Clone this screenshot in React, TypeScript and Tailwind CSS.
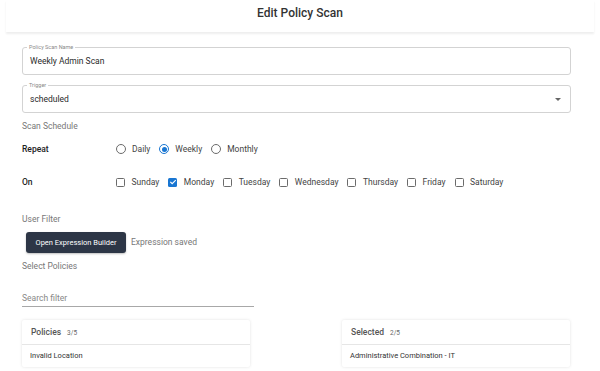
import type { ReactNode } from "react";

const days = ["Sunday", "Monday", "Tuesday", "Wednesday", "Thursday", "Friday", "Saturday"];
const repeats = ["Daily", "Weekly", "Monthly"];

function OutlinedField({ label, children }: { label: string; children: ReactNode }) {
  return (
    <div className="relative flex h-[28px] items-center rounded-[3px] border border-[#d3d3d3] px-[7px]">
      <span className="absolute -top-[5px] left-[4px] bg-white px-[2px] text-[5.5px] leading-[8px] text-[#8a8a8a]">
        {label}
      </span>
      {children}
    </div>
  );
}

function Radio({ checked }: { checked?: boolean }) {
  return (
    <span
      className={`flex h-[10px] w-[10px] items-center justify-center rounded-full border-[1.3px] ${
        checked ? "border-[#1976d2]" : "border-[#6b6b6b]"
      }`}
    >
      {checked && <span className="h-[5px] w-[5px] rounded-full bg-[#1976d2]" />}
    </span>
  );
}

function Checkbox({ checked }: { checked?: boolean }) {
  if (checked) {
    return (
      <span className="flex h-[9px] w-[9px] items-center justify-center rounded-[1.5px] bg-[#1976d2]">
        <svg aria-hidden="true" className="h-[8px] w-[8px]" fill="none" viewBox="0 0 24 24">
          <path d="M5 12.5l4.5 4.5L19 7.5" stroke="white" strokeWidth="3.2" strokeLinecap="square" />
        </svg>
      </span>
    );
  }
  return <span className="h-[9px] w-[9px] rounded-[1.5px] border-[1.2px] border-[#6b6b6b]" />;
}

function ListCard({ title, count, item }: { title: string; count: string; item: string }) {
  return (
    <div className="rounded-[2px] bg-white shadow-[0_0_3px_rgba(0,0,0,0.12)]">
      <div className="flex h-[25px] items-center border-b border-[#e6e6e6] px-[9px]">
        <div className="flex items-baseline gap-[6px]">
          <span className="text-[8.5px] font-medium text-[#555]">{title}</span>
          <span className="text-[6.5px] text-[#666]">{count}</span>
        </div>
      </div>
      <div className="flex h-[22px] items-center px-[8px] text-[7.5px] text-[#333]">{item}</div>
    </div>
  );
}

export default function App() {
  return (
    <div className="h-[371px] w-[600px] overflow-hidden bg-white font-['Roboto',sans-serif] text-[#222]">
      <header className="mx-[6px] flex h-[32px] justify-center pt-[5px] shadow-[0_2px_2px_rgba(0,0,0,0.07)]">
        <h1 className="text-[12px] font-medium leading-[16px] text-[#333]">Edit Policy Scan</h1>
      </header>

      <div className="pl-[22px] pr-[29px]">
        <div className="mt-[15px]">
          <OutlinedField label="Policy Scan Name">
            <span className="text-[8.5px] text-[#2a2a2a]">Weekly Admin Scan</span>
          </OutlinedField>
        </div>
        <div className="mt-[10px]">
          <OutlinedField label="Trigger">
            <span className="flex-1 text-[8.5px] text-[#2a2a2a]">scheduled</span>
            <span className="mr-[2px] h-0 w-0 border-x-[3px] border-t-[3px] border-x-transparent border-t-[#666]" />
          </OutlinedField>
        </div>

        <p className="mt-[7px] text-[8.5px] leading-[12px] text-[#777]">Scan Schedule</p>

        <div className="mt-[9px] flex h-[16px] items-center text-[8.5px]">
          <span className="w-[94px] font-medium text-[#222]">Repeat</span>
          <div className="flex items-center gap-[9px]">
            {repeats.map((r) => (
              <label className="flex items-center gap-[6px] text-[#444]" key={r}>
                <Radio checked={r === "Weekly"} />
                {r}
              </label>
            ))}
          </div>
        </div>

        <div className="mt-[17px] flex h-[16px] items-center text-[8.5px]">
          <span className="w-[94px] font-medium text-[#222]">On</span>
          <div className="flex items-center gap-[9px]">
            {days.map((d) => (
              <label className="flex items-center gap-[6.5px] text-[#444]" key={d}>
                <Checkbox checked={d === "Monday"} />
                {d}
              </label>
            ))}
          </div>
        </div>

        <p className="mt-[23px] text-[8.5px] leading-[12px] text-[#777]">User Filter</p>

        <div className="mt-[7px] flex items-center gap-[5px]">
          <button
            className="ml-[4px] h-[21px] w-[100px] rounded-[3px] bg-[#2d3646] text-[7.5px] font-normal text-white shadow-[0_1px_2px_rgba(0,0,0,0.25)]"
            type="button"
          >
            Open Expression Builder
          </button>
          <span className="text-[8.5px] text-[#777]">Expression saved</span>
        </div>

        <p className="mt-[7px] text-[8.5px] leading-[12px] text-[#777]">Select Policies</p>

        <div className="mt-[20px] w-[232px] border-b border-[#a8a8a8] pb-[2px] text-[8.5px] leading-[12px] text-[#888]">
          Search filter
        </div>

        <div className="mt-[13px] grid grid-cols-[228px_1fr_228px] pr-[1px]">
          <ListCard count="3/5" item="Invalid Location" title="Policies" />
          <div />
          <ListCard count="2/5" item="Administrative Combination - IT" title="Selected" />
        </div>
      </div>
    </div>
  );
}
